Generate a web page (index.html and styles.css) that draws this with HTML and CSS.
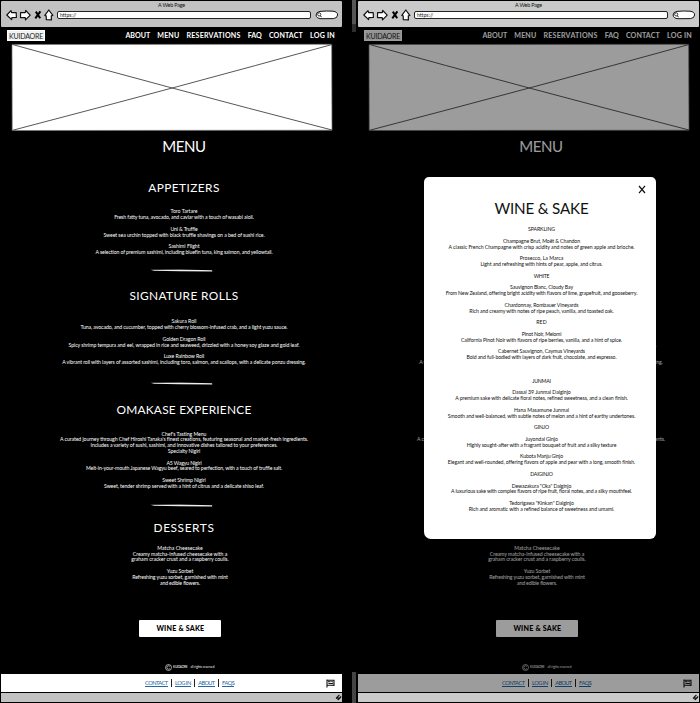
FILE: index.html
```html
<!DOCTYPE html>
<html lang="en">
<head>
<meta charset="utf-8">
<title>Kuidaore menu</title>
<link rel="stylesheet" href="styles.css">
</head>
<body>
<main class="board">
  <div class="frame" id="plain"></div>
  <div class="gutter"><i class="mark light"></i><i class="mark dark"></i><i class="mark low"></i></div>
  <div class="frame" id="dimmed"></div>
</main>

<template id="page">
  <header class="chrome">
    <div class="window-title"><span data-w="27">A Web Page</span></div>
    <div class="toolbar">
      <svg class="controls" width="48" height="12" viewBox="0 0 48 12">
        <g fill="#fff" stroke="#111" stroke-width="1.2" stroke-linejoin="round">
          <path d="M-.2 6 4 1.6 4.6 3.7 9.2 3.6 9.4 8.5 4.9 8.6 4.6 10.6Z"/>
          <path d="M23.2 6.1 18.7 1.5 18.3 3.6 13.6 3.5 13.5 8.6 18.2 8.7 18.5 10.8Z"/>
          <path d="M41.8 1 45.8 6.4 44.3 6.8 44.4 10.9 39.3 10.7 39.2 6.9 37.8 6.4Z"/>
        </g>
        <path d="M28.8 2.6 33.2 9.2M33.4 2.3 28.3 9.4" fill="none" stroke="#000" stroke-width="2"/>
      </svg>
      <div class="url"><span data-w="16">https://</span></div>
      <svg class="search" width="24" height="10" viewBox="0 0 24 10">
        <path d="M5 1.4Q12 .7 18 1.2 22.7 1.9 22.6 5 22.4 8.3 18.3 8.6L6 8.7Q1.2 8.3 1.1 5 1.1 2 5 1.4Z" fill="#fff" stroke="#111"/>
        <circle cx="4.2" cy="4.4" r="1.6" fill="none" stroke="#111" stroke-width=".8"/>
        <path d="M5.3 5.6 6.5 7.2" stroke="#111" stroke-width="1"/>
      </svg>
    </div>
  </header>
  <div class="site">
    <nav class="nav">
      <div class="logo"><span data-w="34">KUIDAORE</span></div>
      <div class="nav-links">
        <span data-w="24.8">ABOUT</span><span data-w="22">MENU</span><span data-w="54.3">RESERVATIONS</span><span data-w="14">FAQ</span><span data-w="34">CONTACT</span><span data-w="25">LOG IN</span>
      </div>
    </nav>
    <svg class="hero" width="321" height="87" viewBox="0 0 321 87">
      <path d="M0 .5 319.7 .3 320 86.2.2 86.5Z" fill="#fff" stroke="#777" stroke-width=".7"/>
      <path d="M.5.5Q150 42 320 86M320 .5Q170 42 .5 86.3" fill="none" stroke="#444" stroke-width=".9"/>
    </svg>
    <h1><span data-w="43.5">MENU</span></h1>
    <div class="sections"></div>
    <div class="button"><span data-w="48">WINE &amp; SAKE</span></div>
    <div class="copyright">
      <svg width="7" height="7" viewBox="0 0 7 7" fill="none" stroke="#fff" stroke-width=".6"><circle cx="3.5" cy="3.5" r="3"/><path d="M4.9 2.4A1.7 1.7 0 1 0 4.9 4.6"/></svg>
      <span data-w="14.5">KUIDAORE</span><span data-w="24">all rights reserved</span>
    </div>
    <footer class="footer">
      <div class="footer-links">
        <a data-w="22.5">CONTACT</a><i></i><a data-w="16">LOG IN</a><i></i><a data-w="16.3">ABOUT</a><i></i><a data-w="12.5">FAQS</a>
      </div>
      <svg class="flag" width="9" height="9" viewBox="0 0 9 9"><path d="M1 .5V8.6M1 1 8 1.2V6.4L1 6" fill="none" stroke="#111" stroke-width="1.1"/><path d="M2 2.7H4.6M5.4 2.5 7.2 3M2.4 4.4 7.3 4.6" stroke="#111" stroke-width="1"/></svg>
    </footer>
  </div>
  <div class="status"><svg width="7" height="7" viewBox="0 0 7 7"><path d="M1 4.4 4.4 1M2.6 5.8 6.1 2.3M1 4.4 3.7 3.8M3 5.9 5.9 3" stroke="#111" stroke-width="1.1" fill="none"/></svg></div>
</template>

<template id="dialog">
  <div class="scrim"></div>
  <div class="modal">
    <svg class="close" width="8" height="9" viewBox="0 0 8 9"><path d="M1 1 7 8M7 .8 1 8.2" stroke="#111" stroke-width="1.2"/></svg>
    <h2><span data-w="94">WINE &amp; SAKE</span></h2>
    <div class="wines"></div>
  </div>
</template>
<script src="menu.js"></script>
</body>
</html>
```
FILE: styles.css
```css
* { box-sizing: border-box; }
body {
  margin: 0;
  background: #000;
  color: #fff;
  font-family: Lato, "Liberation Sans", sans-serif;
  overflow: hidden;
}
.board { display: flex; width: 700px; height: 703px; padding-left: 1px; }
.frame { position: relative; width: 341px; height: 703px; flex: none; }
.gutter { width: 16px; height: 703px; padding-left: 10px; display: flex; flex-direction: column; flex: none; }
.mark { width: 4px; }
.light { height: 24px; background: #555; }
.dark { height: 8px; background: #2e2e2e; }
.low { height: 31px; margin-top: auto; background: #444; }

[data-w] { display: inline-block; white-space: nowrap; }

.chrome {
  height: 26px;
  margin-top: 1px;
  background: #c2c2c2;
  color: #111;
  border-radius: 1px;
}
#dimmed .chrome, #dimmed .status { background: #cacaca; }
.window-title { height: 8px; line-height: 8px; font-size: 5.4px; text-align: center; }
.toolbar { height: 12px; padding-left: 6px; display: flex; align-items: center; }
.controls { overflow: visible; }
.url {
  width: 254px;
  height: 8px;
  margin-left: 2px;
  padding-left: 2px;
  border: 1px solid #222;
  border-radius: 2px;
  background: #fff;
  font-size: 5px;
  line-height: 6px;
}
.search { margin-left: 4px; }

.site { height: 665px; display: flex; flex-direction: column; }
.nav { height: 17px; padding: 3px 7px 0 6px; display: flex; justify-content: space-between; flex: none; }
.logo {
  width: 38px;
  height: 11px;
  border: 1px solid #fff;
  background: #f2f2f2;
  color: #222;
  text-align: center;
  font-size: 7px;
  line-height: 10px;
}
.nav-links { display: flex; gap: 7.1px; font-size: 7.1px; font-weight: 700; line-height: 11px; }
.hero { display: block; margin-left: 11px; flex: none; overflow: visible; }
h1 { margin: 5px 0 0 25px; text-align: center; font-size: 15px; line-height: 20px; font-weight: 400; flex: none; }

.sections { height: 463px; margin-top: 1px; padding-left: 25px; flex: none; }
.section { text-align: center; }
.section h3 { margin: 0; font-size: 11.9px; line-height: 18px; height: 18px; font-weight: 400; }
.lines { font-size: 5.2px; text-align: center; }
.line { height: 5.84px; line-height: 5.84px; }
.rule { display: block; height: 3px; margin: 0 auto; transform: translate(-3px, -.8px); }
.appetizers { height: 108px; padding-top: 22px; }
.rolls { height: 114px; padding-top: 22px; }
.omakase { height: 122px; padding-top: 22px; }
.desserts { height: 119px; padding-top: 17.5px; }
.appetizers .lines { padding-top: 12.2px; height: 72.5px; }
.rolls .lines { padding-top: 14.3px; height: 78px; }
.omakase .lines { padding-top: 12.5px; height: 85.5px; }
.desserts .lines { padding-top: 9.3px; transform: translateX(-4px); }
/* fully behind the dialog */
#dimmed .appetizers { visibility: hidden; }

.button {
  width: 82px;
  height: 17px;
  margin-left: 138.4px;
  border-radius: 1px;
  background: #fff;
  color: #000;
  text-align: center;
  font-size: 7.1px;
  font-weight: 900;
  line-height: 17px;
  flex: none;
}
.copyright { height: 13px; margin: auto 0 0 163.5px; display: flex; align-items: center; gap: 1.5px; font-size: 3.1px; line-height: 7px; }
.copyright span + span { margin-left: 1.5px; }
.footer { height: 18px; background: #fff; display: flex; align-items: center; flex: none; }
.footer-links { width: 325px; padding-left: 144px; display: flex; align-items: center; gap: 3.2px; font-size: 5.7px; line-height: 6px; }
.footer-links a { color: #2467a5; border-bottom: .7px solid #2467a5; }
.footer-links i { width: 1px; height: 8px; background: #222; }
.status { height: 9px; margin-top: 1px; background: #c2c2c2; display: flex; justify-content: flex-end; align-items: center; }

.scrim { position: absolute; inset: 27px 0 11px; background: rgba(0, 0, 0, .39); }
.modal {
  position: absolute;
  left: 66px;
  top: 177px;
  width: 232px;
  height: 362px;
  padding: 7.5px 10px;
  border-radius: 5px 5px 6px 7px;
  background: #fff;
  color: #111;
}
.close { display: block; margin-left: auto; }
.modal h2 { margin: 4px 0 0 3px; height: 29.6px; text-align: center; font-size: 15.2px; line-height: 21px; font-weight: 400; }
.wines { padding-left: 3px; }
```
FILE: menu.js
```js
// Each line is [width in px, text]; null is a blank line.
const sections = [
  { name: 'appetizers', title: [71.5, 'APPETIZERS'], lines: [
    [27, 'Toro Tartare'], [139.5, 'Fresh fatty tuna, avocado, and caviar with a touch of wasabi aioli.'], null,
    [27, 'Uni & Truffle'], [161, 'Sweet sea urchin topped with black truffle shavings on a bed of sushi rice.'], null,
    [31, 'Sashimi Flight'], [177, 'A selection of premium sashimi, including bluefin tuna, king salmon, and yellowtail.']] },
  { name: 'rolls', title: [109, 'SIGNATURE ROLLS'], lines: [
    [25, 'Sakura Roll'], [207, 'Tuna, avocado, and cucumber, topped with cherry blossom-infused crab, and a light yuzu sauce.'], null,
    [43, 'Golden Dragon Roll'], [231, 'Spicy shrimp tempura and eel, wrapped in rice and seaweed, drizzled with a honey soy glaze and gold leaf.'], null,
    [40.5, 'Luxe Rainbow Roll'], [243.5, 'A vibrant roll with layers of assorted sashimi, including toro, salmon, and scallops, with a delicate ponzu dressing.']] },
  { name: 'omakase', title: [135, 'OMAKASE EXPERIENCE'], lines: [
    [45, "Chef's Tasting Menu"], [248, "A curated journey through Chef Hiroshi Tanaka's finest creations, featuring seasonal and market-fresh ingredients."],
    [187, 'Includes a variety of sushi, sashimi, and innovative dishes tailored to your preferences.'], [32.5, 'Specialty Nigiri'], null,
    [35, 'A5 Wagyu Nigiri'], [196, 'Melt-in-your-mouth Japanese Wagyu beef, seared to perfection, with a touch of truffle salt.'], null,
    [43.5, 'Sweet Shrimp Nigiri'], [160, 'Sweet, tender shrimp served with a hint of citrus and a delicate shiso leaf.']] },
  { name: 'desserts', title: [61, 'DESSERTS'], lines: [
    [45.5, 'Matcha Cheesecake'], [94.5, 'Creamy matcha-infused cheesecake with a'], [97.5, 'graham cracker crust and a raspberry coulis.'], null,
    [26.5, 'Yuzu Sorbet'], [95.5, 'Refreshing yuzu sorbet, garnished with mint'], [40, 'and edible flowers.']] }
];

const wines = [
  [27, 'SPARKLING'], null,
  [77, 'Champagne Brut, Moët & Chandon'], [186, 'A classic French Champagne with crisp acidity and notes of green apple and brioche.'], null,
  [43.5, 'Prosecco, La Marca'], [122, 'Light and refreshing with hints of pear, apple, and citrus.'], null,
  [15.5, 'WHITE'], null,
  [63, 'Sauvignon Blanc, Cloudy Bay'], [191.5, 'From New Zealand, offering bright acidity with flavors of lime, grapefruit, and gooseberry.'], null,
  [74, 'Chardonnay, Rombauer Vineyards'], [144.5, 'Rich and creamy with notes of ripe peach, vanilla, and toasted oak.'], null,
  [10.5, 'RED'], null,
  [39.5, 'Pinot Noir, Meiomi'], [161, 'California Pinot Noir with flavors of ripe berries, vanilla, and a hint of spice.'], null,
  [87, 'Cabernet Sauvignon, Caymus Vineyards'], [150, 'Bold and full-bodied with layers of dark fruit, chocolate, and espresso.'], null, null, null,
  [18.5, 'JUNMAI'], null,
  [58.5, 'Dassai 39 Junmai Daiginjo'], [172.5, 'A premium sake with delicate floral notes, refined sweetness, and a clean finish.'], null,
  [55, 'Hana Masamune Junmai'], [187.5, 'Smooth and well-balanced, with subtle notes of melon and a hint of earthy undertones.'], null,
  [15, 'GINJO'], null,
  [32.5, 'Juyondai Ginjo'], [149.5, 'Highly sought-after with a fragrant bouquet of fruit and a silky texture'], null,
  [43, 'Kubota Manju Ginjo'], [187, 'Elegant and well-rounded, offering flavors of apple and pear with a long, smooth finish.'], null,
  [22.5, 'DAIGINJO'], null,
  [59.5, 'Dewazakura "Oka" Daiginjo'], [181, 'A luxurious sake with complex flavors of ripe fruit, floral notes, and a silky mouthfeel.'], null,
  [64.5, 'Tedorigawa "Kinkan" Daiginjo'], [145.5, 'Rich and aromatic with a refined balance of sweetness and umami.']
];

const span = ([w, text]) => `<span data-w="${w}">${text.replace(/&/g, '&amp;')}</span>`;
const block = lines => `<div class="lines">${lines.map(l => `<div class="line">${l ? span(l) : ''}</div>`).join('')}</div>`;
const rule = '<svg class="rule" width="63" height="3" viewBox="0 0 63 3"><path d="M.5.5 30 .4 62 1 62.3 2.3 30 2.1 4 1.6Z" fill="#eee"/></svg>';

function build(frame) {
  frame.append(document.getElementById('page').content.cloneNode(true));
  frame.querySelector('.sections').innerHTML = sections.map(s =>
    `<section class="section ${s.name}"><h3>${span(s.title)}</h3>${block(s.lines)}${s.name === 'desserts' ? '' : rule}</section>`).join('');
}

const dimmed = document.getElementById('dimmed');
build(document.getElementById('plain'));
build(dimmed);
dimmed.append(document.getElementById('dialog').content.cloneNode(true));
dimmed.querySelector('.wines').innerHTML = block(wines);

// Track each label so that it fills its set width.
document.querySelectorAll('[data-w]').forEach(el => {
  const gap = el.dataset.w - el.getBoundingClientRect().width;
  el.style.letterSpacing = gap / el.textContent.length + 'px';
});
```
